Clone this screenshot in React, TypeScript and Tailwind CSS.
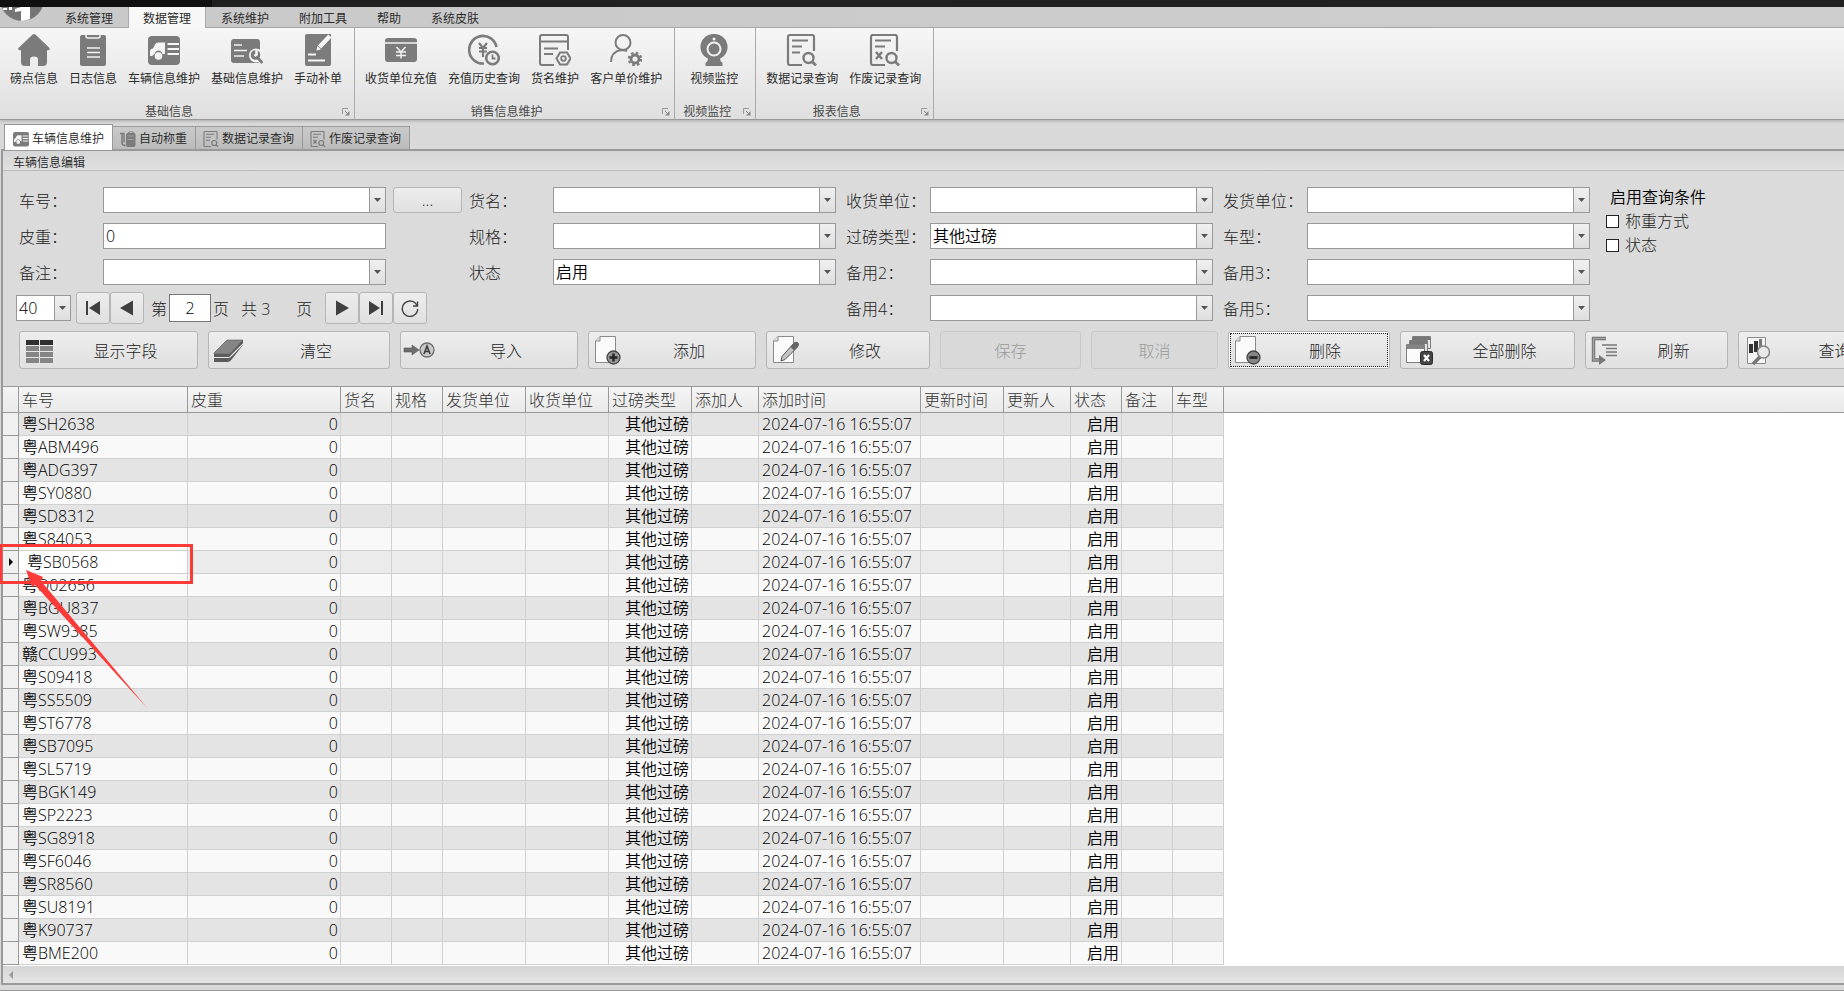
import type { ReactNode } from "react";
import clsx from "clsx";

/* ---------- ribbon icons (32 x 32) ---------- */

function Icon({ size = 32, children }: { size?: number; children: ReactNode }) {
  return (
    <svg width={size} height={size} viewBox="0 0 32 32" fill="none" className="shrink-0 text-[#7b7b7b]">
      {children}
    </svg>
  );
}

function HomeIcon() {
  return (
    <Icon>
      <path
        fill="currentColor"
        d="M16 0q.8 0 1.400.500L31 13.500q1.800 2-.5 2.700H29V28q0 4-4 4h-5v-7q0-2.500-4-2.500T12 25v7H7q-4 0-4-4V16.200H1.500q-2.300-.7-.5-2.700L14.600.5Q15.200 0 16 0Z"
      />
    </Icon>
  );
}

function ClipboardIcon() {
  return (
    <Icon>
      <rect x="3" y="1" width="26" height="31" rx="2" fill="currentColor" />
      <path d="M9 0v2q0 2 2 2h10q2 0 2-2V0" stroke="#f2f2f2" strokeWidth="1.500" />
      <path d="M10 14h13M10 18.500h13M10 23h13" stroke="#f2f2f2" strokeWidth="1.300" />
    </Icon>
  );
}

function TruckIcon({ size }: { size?: number }) {
  return (
    <Icon size={size}>
      <rect y="2" width="32" height="29" rx="4" fill="currentColor" />
      <path fill="#f5f5f5" d="M2 22v-5q0-2 3-2.500l2-4q1-2 3-2h7V20h-2.500q-1-3.500-4-3.500T6.500 20L4 22Z" />
      <circle cx="10.500" cy="22" r="3.800" fill="#f5f5f5" />
      <path d="M19.500 10H31M19.500 15H31M19.500 20H31" stroke="#f5f5f5" strokeWidth="2" />
    </Icon>
  );
}

function CardWrenchIcon() {
  return (
    <Icon>
      <rect y="5" width="29" height="24" rx="3" fill="currentColor" />
      <path d="M3 11h8M3 16.500h13M3 22h10" stroke="#f2f2f2" strokeWidth="1.400" />
      <circle cx="25" cy="21.500" r="7" fill="#f2f2f2" />
      <path d="m26 23 5.500 6" stroke="currentColor" strokeWidth="2.800" />
      <circle cx="24.500" cy="21" r="4.800" fill="currentColor" />
      <path d="M25.500 15v5.500l-2 1.500" stroke="#f2f2f2" strokeWidth="2.600" />
    </Icon>
  );
}

function NotePenIcon() {
  return (
    <Icon>
      <path fill="currentColor" d="M5 0h24v30q0 2-2 2H5q-2 0-2-2V2q0-2 2-2Z" />
      <path d="M28 2 17.500 13" stroke="#f5f5f5" strokeWidth="4.500" />
      <path d="m14.500 16.500 1-4.500 3.500 3.500Z" fill="#f5f5f5" />
      <path d="M6 20.500h8M6 26.500h17" stroke="#f5f5f5" strokeWidth="2" />
    </Icon>
  );
}

function YenCardIcon() {
  return (
    <Icon>
      <rect y="4" width="32" height="24" rx="3" fill="currentColor" />
      <path d="M0 9h32" stroke="#f2f2f2" strokeWidth="1.500" />
      <path d="m11.500 13 4.500 5 4.500-5M16 18v6.500M11 18h10M11 21.500h10" stroke="#f2f2f2" strokeWidth="1.500" />
    </Icon>
  );
}

function YenHistoryIcon() {
  return (
    <Icon>
      <path d="M28.500 13A13.800 13.800 0 1 0 16 29.500" stroke="currentColor" strokeWidth="2.600" />
      <path d="m11 9 4 5 4-5M15 14v9M11 14h8M11 17.500h8" stroke="currentColor" strokeWidth="2.200" />
      <circle cx="24.500" cy="24" r="6.300" stroke="currentColor" strokeWidth="2.600" />
      <path d="M24.500 20.500v4h3" stroke="currentColor" strokeWidth="1.800" />
    </Icon>
  );
}

function GoodsIcon() {
  return (
    <Icon>
      <path d="M29 16V3q0-2-2-2H3Q1 1 1 3v26q0 2 2 2h12" stroke="currentColor" strokeWidth="2" />
      <path d="M1 7.500h28M5 14.500h14M5 20h9" stroke="currentColor" strokeWidth="2" />
      <path d="M21 18.500h7l3.500 6-3.500 6h-7l-3.500-6Z" stroke="currentColor" strokeWidth="2" />
      <circle cx="24.500" cy="24.500" r="2.300" stroke="currentColor" strokeWidth="1.800" />
    </Icon>
  );
}

function UserGearIcon() {
  return (
    <Icon>
      <circle cx="13" cy="8.500" r="7.500" stroke="currentColor" strokeWidth="2" />
      <path d="M1 28c0-7 4-11 10-12 3 0 4 0 6 1" stroke="currentColor" strokeWidth="2" />
      <circle cx="25" cy="25" r="4" stroke="currentColor" strokeWidth="2.800" />
      <circle cx="25" cy="25" r="6.200" stroke="currentColor" strokeWidth="2.200" strokeDasharray="2.600 2.270" />
    </Icon>
  );
}

function WebcamIcon() {
  return (
    <Icon>
      <path fill="currentColor" d="M16 0a13 13 0 0 1 6 24.800q0 3 2.500 4.200v3h-17v-3q2.500-1.200 2.500-4.200A13 13 0 0 1 16 0Z" />
      <circle cx="16" cy="15" r="6.500" stroke="#f2f2f2" strokeWidth="2" />
      <circle cx="16" cy="5" r="1.500" fill="#f2f2f2" />
    </Icon>
  );
}

function ReportIcon({ size, voided }: { size?: number; voided?: boolean }) {
  return (
    <Icon size={size}>
      <path d="M28 17V3q0-2-2-2H4Q2 1 2 3v26q0 2 2 2h12" stroke="currentColor" strokeWidth="2.200" />
      <path d="M6 6.500h16M6 12.500h10" stroke="currentColor" strokeWidth="2" />
      {voided ? (
        <path d="m7 18 6 7M13 18l-6 7" stroke="currentColor" strokeWidth="2.400" />
      ) : (
        <path d="M6 18.500h8" stroke="currentColor" strokeWidth="2" />
      )}
      <circle cx="22.500" cy="24" r="5" stroke="currentColor" strokeWidth="2.400" />
      <path d="m26 27.500 4 4" stroke="currentColor" strokeWidth="2.600" />
    </Icon>
  );
}

function ScaleIcon({ size }: { size?: number }) {
  return (
    <Icon size={size}>
      <path d="M0 5h9M4 5v18q0 6 7 6M8 5v18" stroke="currentColor" strokeWidth="3" />
      <path fill="currentColor" d="M12 8q0-4 4-4l2-3h8l2 3q3 0 3 4v20q0 4-4 4H16q-4 0-4-4Z" />
      <path d="M15 10h13M15 17h13" stroke="#b0b0b0" strokeWidth="1.500" />
      <path d="M19 3h6" stroke="#c8c8c8" strokeWidth="1.500" />
    </Icon>
  );
}

/* ---------- toolbar icons ---------- */

function ToolSvg({ children }: { children: ReactNode }) {
  return (
    <svg width="32" height="32" viewBox="0 0 32 32" fill="none" className="shrink-0">
      {children}
    </svg>
  );
}

function Page() {
  return (
    <>
      <path d="M9 2.500h15.500v26H4.500V7Z" fill="#fafafa" stroke="#8a8a8a" />
      <path d="M9 2.500V7H4.500" fill="#ddd" stroke="#8a8a8a" />
    </>
  );
}

const toolIcons = {
  fields: (
    <ToolSvg>
      <path fill="#2f2f2f" d="M4 6h13v5H4zM18 6h13v5H18z" />
      <path fill="#858585" d="M4 12h13v5H4zM18 12h13v5H18zM4 18h13v5H4zM18 18h13v5H18zM4 24h13v5H4zM18 24h13v5H18z" />
    </ToolSvg>
  ),
  clear: (
    <ToolSvg>
      <path d="M3 19 15 7q1-1 2.500-1H32v5L21 25q-2 3-4 3H3Z" fill="#5c5c5c" />
      <path d="M3 19 15 7q1-1 2.500-1H32L20 19q-1 1-2 1H3Z" fill="#858585" stroke="#5a5a5a" strokeWidth=".6" />
      <path d="M3 23.500h14q2 0 3-1.500L32 10" stroke="#e8e8e8" strokeWidth="1.200" />
    </ToolSvg>
  ),
  import: (
    <ToolSvg>
      <path fill="#6e6e6e" stroke="#555" strokeWidth=".6" d="M1 14h8v-3l7 5-7 5v-3H1z" />
      <circle cx="24" cy="16" r="7" fill="#c9c9c9" stroke="#6e6e6e" strokeWidth="1.300" />
      <path d="m21 20 3-8 3 8M22 17.500h4" stroke="#3c3c3c" strokeWidth="1.600" />
    </ToolSvg>
  ),
  add: (
    <ToolSvg>
      <Page />
      <circle cx="22.500" cy="23.500" r="6.500" fill="#969696" stroke="#444" strokeWidth="1.300" />
      <path d="M22.500 19.500v8M18.500 23.500h8" stroke="#222" strokeWidth="2.400" />
    </ToolSvg>
  ),
  edit: (
    <ToolSvg>
      <Page />
      <path d="m12 27 1-4.500L25 9q2-1.500 4 0 1 2-.5 4L16 25.500Z" fill="#c4c4c4" stroke="#555" />
      <path d="m21.500 13 3.500-4q2-1.500 4 0 1 2-.5 4L25 16.500Z" fill="#666" />
    </ToolSvg>
  ),
  remove: (
    <ToolSvg>
      <Page />
      <circle cx="22.500" cy="23.500" r="6.500" fill="#858585" stroke="#444" strokeWidth="1.300" />
      <path d="M18.500 23.500h8" stroke="#222" strokeWidth="2.600" />
    </ToolSvg>
  ),
  removeAll: (
    <ToolSvg>
      <path d="M9.500 2.500h18v12h-18z" fill="#e4e4e4" stroke="#7d7d7d" />
      <path d="M10 3h17v3H10z" fill="#777" />
      <path d="M6.500 6.500h18v12h-18z" fill="#e4e4e4" stroke="#7d7d7d" />
      <path d="M7 7h17v3H7z" fill="#777" />
      <path d="M3.500 10.500h18v18h-18z" fill="#fafafa" stroke="#7d7d7d" />
      <path d="M4 11h17v4H4z" fill="#858585" />
      <rect x="17.500" y="17.500" width="12" height="13" rx="2" fill="#444" stroke="#2c2c2c" />
      <path d="m21 21 5 6M26 21l-5 6" stroke="#fff" strokeWidth="2.200" />
    </ToolSvg>
  ),
  refresh: (
    <ToolSvg>
      <path d="M18 4.500H5.500V26H13" stroke="#6c6c6c" strokeWidth="3.400" />
      <path d="M18 4.500H5.500V26H12" stroke="#a4a4a4" strokeWidth="1.600" />
      <path fill="#777" d="m11 21 7 5-7 5z" />
      <path d="M14 11h15M18 14.500h11M18 18h11M18 21.500h11" stroke="#777" strokeWidth="1.400" />
    </ToolSvg>
  ),
  query: (
    <ToolSvg>
      <path d="M6.500 3.500h18v26h-18z" fill="#f5f5f5" stroke="#8a8a8a" />
      <path fill="#333" d="M8 10h4v9H8zM13 7h4v11h-4z" />
      <path fill="#777" d="M18 5h3v9h-3z" />
      <path d="m19 23-7 7" stroke="#777" strokeWidth="3.500" />
      <circle cx="22.500" cy="18" r="6" fill="#e8e8e8" stroke="#858585" strokeWidth="1.500" />
    </ToolSvg>
  ),
};

/* ---------- data ---------- */

const menuTabs = ["系统管理", "数据管理", "系统维护", "附加工具", "帮助", "系统皮肤"];

const ribbonGroups = [
  {
    caption: "基础信息",
    items: [
      { label: "磅点信息", icon: <HomeIcon /> },
      { label: "日志信息", icon: <ClipboardIcon /> },
      { label: "车辆信息维护", icon: <TruckIcon /> },
      { label: "基础信息维护", icon: <CardWrenchIcon /> },
      { label: "手动补单", icon: <NotePenIcon /> },
    ],
  },
  {
    caption: "销售信息维护",
    items: [
      { label: "收货单位充值", icon: <YenCardIcon /> },
      { label: "充值历史查询", icon: <YenHistoryIcon /> },
      { label: "货名维护", icon: <GoodsIcon /> },
      { label: "客户单价维护", icon: <UserGearIcon /> },
    ],
  },
  { caption: "视频监控", items: [{ label: "视频监控", icon: <WebcamIcon /> }] },
  {
    caption: "报表信息",
    items: [
      { label: "数据记录查询", icon: <ReportIcon /> },
      { label: "作废记录查询", icon: <ReportIcon voided /> },
    ],
  },
];

const docTabs = [
  { label: "车辆信息维护", icon: <TruckIcon size={16} /> },
  { label: "自动称重", icon: <ScaleIcon size={16} /> },
  { label: "数据记录查询", icon: <ReportIcon size={16} /> },
  { label: "作废记录查询", icon: <ReportIcon size={16} voided /> },
];

const tools = [
  { label: "显示字段", icon: toolIcons.fields, width: "w-[179px]" },
  { label: "清空", icon: toolIcons.clear, width: "w-[182px]" },
  { label: "导入", icon: toolIcons.import, width: "w-[178px]" },
  { label: "添加", icon: toolIcons.add, width: "w-[168px]" },
  { label: "修改", icon: toolIcons.edit, width: "w-[164px]" },
  { label: "保存", width: "w-[141px]", disabled: true },
  { label: "取消", width: "w-[127px]", disabled: true },
  { label: "删除", icon: toolIcons.remove, width: "w-[162px]", focused: true },
  { label: "全部删除", icon: toolIcons.removeAll, width: "w-[175px]" },
  { label: "刷新", icon: toolIcons.refresh, width: "w-[143px]" },
  { label: "查询", icon: toolIcons.query, width: "w-[159px]" },
];

const columns = [
  { title: "车号", width: "w-[169px]" },
  { title: "皮重", width: "w-[153px]" },
  { title: "货名", width: "w-[51px]" },
  { title: "规格", width: "w-[51px]" },
  { title: "发货单位", width: "w-[83px]" },
  { title: "收货单位", width: "w-[83px]" },
  { title: "过磅类型", width: "w-[83px]" },
  { title: "添加人", width: "w-[67px]" },
  { title: "添加时间", width: "w-[162px]" },
  { title: "更新时间", width: "w-[83px]" },
  { title: "更新人", width: "w-[67px]" },
  { title: "状态", width: "w-[51px]" },
  { title: "备注", width: "w-[51px]" },
  { title: "车型", width: "w-[51px]" },
];

const plates = [
  "粤SH2638", "粤ABM496", "粤ADG397", "粤SY0880", "粤SD8312", "粤S84053",
  "粤SB0568", "粤D02656", "粤BGU837", "粤SW9385", "赣CCU993", "粤S09418",
  "粤SS5509", "粤ST6778", "粤SB7095", "粤SL5719", "粤BGK149", "粤SP2223",
  "粤SG8918", "粤SF6046", "粤SR8560", "粤SU8191", "粤K90737", "粤BME200",
];

const selectedPlate = "粤SB0568";

/* ---------- form parts ---------- */

function Combo({ id, value = "", className, label }: { id: string; value?: string; className?: string; label?: string }) {
  return (
    <div className={clsx("relative h-[26px] border border-[#999] bg-white", className)}>
      <select
        id={id}
        aria-label={label}
        defaultValue={value}
        className="block h-full w-full appearance-none bg-transparent pl-0.5 leading-6 font-[350] text-black outline-none"
      >
        <option>{value}</option>
      </select>
      <span className="pointer-events-none absolute inset-y-0 right-0 flex w-4 items-center justify-center border-l border-[#999] bg-linear-to-b from-[#f0f0f0] to-[#dedede]">
        <svg width="7" height="4" viewBox="0 0 7 4">
          <path d="M0 0h7L3.500 4z" fill="#555" />
        </svg>
      </span>
    </div>
  );
}

function Field({ id, label, value, indent }: { id: string; label: string; value?: string; indent?: boolean }) {
  return (
    <>
      <label htmlFor={id} className={clsx("pt-0.5", indent && "pl-[10px]")}>
        {label}
      </label>
      <Combo id={id} value={value} />
    </>
  );
}

function PageButton({ label, children }: { label: string; children: ReactNode }) {
  return (
    <button
      aria-label={label}
      className="flex h-8 w-[34px] items-center justify-center rounded-[3px] border border-[#b5b5b5] bg-linear-to-b from-[#ededed] to-[#e0e0e0]"
    >
      <svg width="18" height="18" viewBox="0 0 18 18" fill="#3f3f3f">
        {children}
      </svg>
    </button>
  );
}

function Pager() {
  return (
    <div className="col-span-5 -ml-[3px] flex items-center">
      <Combo id="pageSize" label="每页条数" value="40" className="w-[55px]" />
      <div className="ml-[5px] flex">
        <PageButton label="首页">
          <path d="M2 2h2v14H2zM16 2v14L5 9z" />
        </PageButton>
        <PageButton label="上一页">
          <path d="M15 1.500v15L2 9z" />
        </PageButton>
      </div>
      <label htmlFor="pageNo" className="ml-[7px] pt-0.5">
        第
      </label>
      <input
        id="pageNo"
        defaultValue="2"
        className="ml-0.5 h-7 w-[42px] border border-[#777] bg-white text-center font-[350] text-black outline-none"
      />
      <span className="ml-0.5 pt-0.5">页</span>
      <span className="ml-3 pt-0.5">共 3</span>
      <span className="ml-[26px] pt-0.5">页</span>
      <div className="ml-[13px] flex">
        <PageButton label="下一页">
          <path d="M3 1.500v15L16 9z" />
        </PageButton>
        <PageButton label="末页">
          <path d="M2 2v14L13 9zM14 2h2v14h-2z" />
        </PageButton>
        <PageButton label="重新加载">
          <path d="M16 6.500A7.700 7.700 0 1 0 16.700 10" fill="none" stroke="#3f3f3f" strokeWidth="1.400" />
          <path d="M16.500 2.500v4.500H12" fill="none" stroke="#3f3f3f" strokeWidth="1.400" />
        </PageButton>
      </div>
    </div>
  );
}

/* ---------- page sections ---------- */

function Launcher() {
  return (
    <svg width="8" height="8" viewBox="0 0 8 8" fill="none" className="mr-1 shrink-0">
      <path d="M.5 6V.5H6" stroke="#999" />
      <path d="M7.500 3v4.500H3z" fill="#888" />
      <path d="m3 3 3 3" stroke="#888" />
    </svg>
  );
}

function Ribbon() {
  return (
    <header className="font-normal">
      <div className="flex h-[7px] bg-[#202020]">
        <div className="w-[212px] bg-[#101010]" />
      </div>
      <nav className="flex h-[21px] border-b border-[#a8a8a8] bg-linear-to-r from-[#c9c9c9] to-[#cecece] text-xs text-[#2b2b2b]">
        <svg width="50" height="15" viewBox="0 0 50 15" className="shrink-0">
          <circle cx="22" cy="-8" r="22" fill="#757575" />
          <path d="M21 0h9v12q-4 2-9 2V4l-6 1V2z" fill="#fff" />
          <path d="M3 1h4v2H3zM9 0h3v3H9z" fill="#fff" />
        </svg>
        {menuTabs.map((tab) => (
          <button
            key={tab}
            className={clsx(
              "whitespace-nowrap pt-[3px]",
              tab === "数据管理" ? "-mb-px border-x border-[#aaa] bg-[#f7f7f7] px-[14px]" : "px-[15px]",
            )}
          >
            {tab}
          </button>
        ))}
      </nav>
      <div className="flex h-[92px] border-b border-[#999] bg-linear-to-b from-[#f6f6f6] to-[#dfdfdf] text-xs text-[#2b2b2b] shadow-[0_1px_3px_#aaa]">
        {ribbonGroups.map((group) => (
          <section key={group.caption} className="flex min-w-[81px] flex-col border-r border-[#aaa]">
            <div className="flex justify-center gap-[11px] pt-1.5 pr-3 pl-[10px]">
              {group.items.map((item) => (
                <button key={item.label} className="flex flex-col items-center gap-[5px] whitespace-nowrap leading-4">
                  {item.icon}
                  {item.label}
                </button>
              ))}
            </div>
            <div className="mt-auto flex items-center text-[#484848]">
              <h2 className="flex-1 pr-1 text-center leading-[15px]">{group.caption}</h2>
              <button aria-label={group.caption + "选项"}>
                <Launcher />
              </button>
            </div>
          </section>
        ))}
      </div>
    </header>
  );
}

function DocTabs() {
  return (
    <div className="flex h-[29px] items-end pl-1 text-xs font-[350] text-[#222]">
      {docTabs.map((tab, i) => (
        <button
          key={tab.label}
          className={clsx(
            "flex items-center gap-[3px] whitespace-nowrap border border-b-0 border-[#999] pt-0.5",
            i === 0
              ? "z-10 -mb-px h-[26px] bg-white px-2"
              : "-ml-px h-[23px] bg-linear-to-b from-[#cacaca] to-[#bbb] pr-2 pl-[7px]",
          )}
        >
          {tab.icon}
          {tab.label}
        </button>
      ))}
    </div>
  );
}

function VehicleForm() {
  return (
    <form className="overflow-hidden pt-[13px] pb-[17px] pl-4 text-[#222]" onSubmit={(e) => e.preventDefault()}>
      <div className="flex">
        <div className="grid shrink-0 auto-rows-[26px] grid-cols-[84px_283px_83px_84px_283px_94px_283px_94px_283px] items-center gap-y-[10px] pt-[3px]">
          <Field id="plate" label="车号：" />
          <button className="ml-[7px] h-[26px] w-[69px] rounded-[3px] border border-[#b5b5b5] bg-linear-to-b from-[#ededed] to-[#e0e0e0]">
            ...
          </button>
          <Field id="goods" label="货名：" />
          <Field id="receiver" label="收货单位：" indent />
          <Field id="sender" label="发货单位：" indent />

          <label htmlFor="tare" className="pt-0.5">
            皮重：
          </label>
          <input
            id="tare"
            defaultValue="0"
            className="h-[26px] w-full border border-[#999] bg-white pl-0.5 font-[350] text-black outline-none"
          />
          <span />
          <Field id="spec" label="规格：" />
          <Field id="weighType" label="过磅类型：" value="其他过磅" indent />
          <Field id="model" label="车型：" indent />

          <Field id="remark" label="备注：" />
          <span />
          <Field id="state" label="状态" value="启用" />
          <Field id="spare2" label="备用2：" indent />
          <Field id="spare3" label="备用3：" indent />

          <Pager />
          <Field id="spare4" label="备用4：" indent />
          <Field id="spare5" label="备用5：" indent />
        </div>
        <fieldset className="ml-4 shrink-0 leading-6">
          <legend className="pt-px pl-1 font-[350] text-black">启用查询条件</legend>
          {["称重方式", "状态"].map((name) => (
            <label key={name} className="flex items-center gap-1.5">
              <input type="checkbox" className="size-[13px] appearance-none border border-[#222] bg-white checked:bg-[#555]" />
              {name}
            </label>
          ))}
        </fieldset>
      </div>
      <div className="mt-[10px] flex gap-[10px]">
        {tools.map((tool) => (
          <button
            key={tool.label}
            disabled={tool.disabled}
            className={clsx(
              "h-[38px] shrink-0 rounded-[3px] border",
              tool.width,
              tool.disabled
                ? "border-[#c8c8c8] bg-[#d9d9d9] text-[#999]"
                : "border-[#b5b5b5] bg-linear-to-b from-[#ededed] to-[#e0e0e0]",
              tool.focused && "p-px shadow-[inset_0_0_0_1px_#fff]",
            )}
          >
            <span
              className={clsx(
                "flex h-full items-center",
                tool.focused && "border border-dotted border-[#222]",
                tool.icon && !tool.focused && "pl-0.5",
              )}
            >
              {tool.icon}
              <span className="flex-1 pt-0.5">{tool.label}</span>
            </span>
          </button>
        ))}
      </div>
    </form>
  );
}

function VehicleTable() {
  return (
    <table className="w-full table-fixed border-separate border-spacing-0 whitespace-nowrap text-black">
      <thead>
        <tr className="bg-linear-to-b from-[#f5f5f5] to-[#e9e9e9] text-left text-[#333]">
          <th className="h-[27px] w-4 border-y border-r border-[#999] p-0" />
          {columns.map((col) => (
            <th
              key={col.title}
              className={clsx("h-[27px] border-y border-r border-[#999] py-0 pr-0 pl-[3px] leading-6 font-light", col.width)}
            >
              {col.title}
            </th>
          ))}
          <th className="border-y border-[#999] p-0" />
        </tr>
      </thead>
      <tbody>
        {plates.map((plate, i) => {
          const selected = plate === selectedPlate;
          const cells = [plate, "0", "", "", "", "", "其他过磅", "", "2024-07-16 16:55:07", "", "", "启用", "", ""];
          return (
            <tr key={plate} className={selected ? "bg-[#ebebeb]" : i % 2 === 0 ? "bg-[#e4e4e4]" : "bg-[#f9f9f9]"}>
              <td className="h-[23px] border-r border-b border-[#999] bg-[#f0f0f0] p-0">
                {selected && (
                  <svg width="4" height="8" viewBox="0 0 4 8" className="mx-auto">
                    <path d="M0 0v8l4-4z" />
                  </svg>
                )}
              </td>
              {cells.map((cell, c) => (
                <td
                  key={c}
                  className={clsx(
                    "h-[23px] border-r border-b border-[#d0d0d0] py-0 pr-0.5 leading-[22px] font-[350]",
                    (c === 1 || c === 6 || c === 11) && "text-right",
                    c === 0 && selected ? "bg-white pl-2" : "pl-[3px]",
                  )}
                >
                  {cell}
                </td>
              ))}
              <td className="bg-white p-0" />
            </tr>
          );
        })}
      </tbody>
    </table>
  );
}

// Red box and arrow pointing at the selected row.
function Callout() {
  return (
    <svg width="194" height="166" viewBox="0 0 194 166" className="pointer-events-none absolute top-[424px] left-0">
      <path d="M-2 1.500h193.500v37H-2M1 0v40" fill="none" stroke="#fc3a38" strokeWidth="3" />
      <path d="m26 26 17 7-2 4 107 128L35 41l-3 2z" fill="#fc3a38" />
    </svg>
  );
}

export default function App() {
  return (
    <div className='flex min-h-screen flex-col overflow-hidden border-b border-[#999] bg-[#d9d9d9] font-["Open_Sans","Noto_Sans_CJK_SC",sans-serif] font-light'>
      <Ribbon />
      <div className="relative flex flex-1 flex-col">
        <DocTabs />
        <main className="mb-[5px] ml-px flex flex-1 flex-col border-y-2 border-l-2 border-[#999] bg-[#dbdbdb]">
          <h1 className="h-5 border-b border-[#bbb] bg-linear-to-b from-[#d6d6d6] to-[#dfdfdf] pt-px pl-[10px] text-xs leading-[22px] font-[350] text-[#222]">
            车辆信息编辑
          </h1>
          <VehicleForm />
          <div className="flex-1 bg-white">
            <VehicleTable />
          </div>
          <div className="flex h-[17px] items-center bg-linear-to-b from-[#d6d6d6] to-[#e4e4e4] pl-1.5">
            <svg width="4" height="8" viewBox="0 0 4 8">
              <path d="M4 0v8L0 4z" fill="#999" />
            </svg>
          </div>
        </main>
        <Callout />
      </div>
    </div>
  );
}
